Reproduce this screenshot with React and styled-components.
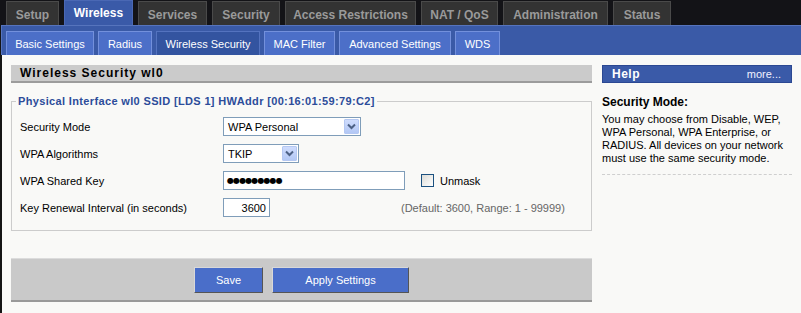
import React from 'react';
import styled, { createGlobalStyle } from 'styled-components';

const Global = createGlobalStyle`
  * { box-sizing: border-box; }
  html, body { margin: 0; padding: 0; background: #141414; }
  body {
    font-family: "Liberation Sans", Arial, sans-serif;
    font-size: 11px;
    color: #000;
  }
`;

const Page = styled.div`
  width: 801px;
  height: 313px;
  overflow: hidden;
  background: #141414;
  display: flex;
  flex-direction: column;
`;

const TopBar = styled.nav`
  height: 25px;
  flex: none;
  display: flex;
  align-items: flex-end;
  gap: 5px;
  padding-left: 6px;
  background: #131317;
`;

const MainTab = styled.div`
  width: ${p => p.$w}px;
  height: ${p => (p.$active ? 25 : 24)}px;
  display: flex;
  align-items: center;
  justify-content: center;
  font-weight: bold;
  font-size: 12px;
  color: ${p => (p.$active ? '#ffffff' : '#9a9a9a')};
  background: ${p => (p.$active ? '#3a5aa8' : '#333333')};
  border: 1px solid ${p => (p.$active ? '#4a68b4' : '#4a4a4a')};
  border-bottom: none;
  padding-top: ${p => (p.$active ? 0 : 2)}px;
`;

const SubBar = styled.div`
  height: 30px;
  flex: none;
  margin-left: 1px;
  display: flex;
  align-items: flex-end;
  gap: 4px;
  padding-left: 4px;
  background: #3a5aa7;
  border-top: 1px solid #5674bd;
  border-left: 1px solid #5674bd;
`;

const SubTab = styled.div`
  width: ${p => p.$w}px;
  height: 24px;
  display: flex;
  align-items: center;
  justify-content: center;
  color: #fff;
  font-size: 11px;
  background: ${p => (p.$active ? '#3354a0' : '#4c6fc8')};
  border: 1px solid ${p => (p.$active ? '#5473bf' : '#7390dc')};
  border-bottom: none;
`;

const Content = styled.main`
  flex: 1;
  margin-left: 2px;
  background: #f9f9f7;
  display: grid;
  grid-template-columns: 581px 190px;
  column-gap: 10px;
  align-items: start;
  padding: 10px 0 0 9px;
`;

const MainCol = styled.section`
  display: flex;
  flex-direction: column;
`;

const SectionHeader = styled.h2`
  margin: 0;
  height: 18px;
  display: flex;
  align-items: center;
  padding-left: 9px;
  font-size: 12px;
  font-weight: bold;
  letter-spacing: 1px;
  background: #cbcbcb;
  border-bottom: 2px solid #9c9c9c;
`;

const Fieldset = styled.fieldset`
  margin: 11px 0 0 0;
  border: 1px solid #cccccc;
  padding: 5px 8px 9px 8px;
`;

const Legend = styled.legend`
  margin-left: -4px;
  padding: 0 2px;
  color: #2c4c9a;
  font-weight: bold;
  font-size: 11px;
  letter-spacing: 0.35px;
  line-height: 14px;
`;

const Row = styled.div`
  height: 27px;
  display: flex;
  align-items: center;
`;

const Label = styled.div`
  width: 203px;
  flex: none;
`;

const SelectBox = styled.div`
  width: ${p => p.$w}px;
  height: 19px;
  display: flex;
  align-items: center;
  justify-content: space-between;
  background: #fff;
  border: 1px solid #7f9db9;
  padding-left: 4px;
`;

const Arrow = styled.span`
  width: 15px;
  height: 15px;
  margin-right: 1px;
  display: flex;
  align-items: center;
  justify-content: center;
  background: linear-gradient(#cfdcfd, #b3c8f5);
  border: 1px solid #b5c8f2;
  border-radius: 1px;
`;

const TextBox = styled.div`
  width: ${p => p.$w}px;
  height: 19px;
  display: flex;
  align-items: center;
  justify-content: ${p => (p.$right ? 'flex-end' : 'flex-start')};
  background: #fff;
  border: 1px solid #7f9db9;
  padding: 0 3px 0 3px;
  font-family: ${p => (p.$dots ? '"DejaVu Sans", sans-serif' : 'inherit')};
  font-size: ${p => (p.$dots ? '8px' : '11px')};
  letter-spacing: ${p => (p.$dots ? '-0.9px' : 'normal')};
`;

const CheckLabel = styled.label`
  margin-left: 16px;
  display: flex;
  align-items: center;
  gap: 6px;
`;

const Check = styled.span`
  width: 13px;
  height: 13px;
  border: 1px solid #1c5180;
  background: linear-gradient(135deg, #dcdcd7, #ffffff);
`;

const Note = styled.span`
  margin-left: ${p => p.$ml}px;
  color: #666;
`;

const ButtonBar = styled.div`
  margin-top: 27px;
  height: 44px;
  display: flex;
  align-items: center;
  justify-content: center;
  gap: 9px;
  background: #c9c9c9;
  border-top: 1px solid #dcdcdc;
  border-bottom: 2px solid #999;
`;

const Button = styled.button`
  width: ${p => p.$w}px;
  height: 26px;
  font-family: "Liberation Sans", Arial, sans-serif;
  font-size: 11px;
  color: #fff;
  background: #4a6ec9;
  border: 1px solid;
  border-color: #d8d8d8 #555 #555 #d8d8d8;
  padding: 0;
`;

const HelpCol = styled.aside`
  display: flex;
  flex-direction: column;
`;

const HelpHeader = styled.div`
  height: 18px;
  display: flex;
  align-items: center;
  justify-content: space-between;
  padding: 0 10px 0 9px;
  background: #3a5aa8;
  border: 1px solid #2b4892;
  color: #fff;
`;

const HelpTitle = styled.span`
  font-weight: bold;
  font-size: 12px;
  letter-spacing: 0.5px;
`;

const More = styled.span`
  font-size: 11px;
  color: #f0f0ff;
`;

const HelpHeading = styled.div`
  margin-top: 12px;
  font-weight: bold;
  font-size: 12px;
  line-height: 14px;
`;

const HelpText = styled.p`
  margin: 4px 0 0 0;
  line-height: 13px;
  padding-bottom: 9px;
  border-bottom: 1px dashed #cfcfcf;
`;

const Chevron = () => (
  <svg width="9" height="7" viewBox="0 0 9 7">
    <path d="M1 1.5 L4.5 5 L8 1.5" fill="none" stroke="#4d6185" strokeWidth="2" />
  </svg>
);

const mainTabs = [
  ['Setup', 53],
  ['Wireless', 69, true],
  ['Services', 69],
  ['Security', 68],
  ['Access Restrictions', 131],
  ['NAT / QoS', 77],
  ['Administration', 105],
  ['Status', 58],
];

const subTabs = [
  ['Basic Settings', 88],
  ['Radius', 54],
  ['Wireless Security', 104, true],
  ['MAC Filter', 71],
  ['Advanced Settings', 112],
  ['WDS', 45],
];

export default function App() {
  return (
    <>
      <Global />
      <Page>
        <TopBar>
          {mainTabs.map(([t, w, a]) => (
            <MainTab key={t} $w={w} $active={a}>{t}</MainTab>
          ))}
        </TopBar>
        <SubBar>
          {subTabs.map(([t, w, a]) => (
            <SubTab key={t} $w={w} $active={a}>{t}</SubTab>
          ))}
        </SubBar>
        <Content>
          <MainCol>
            <SectionHeader>Wireless Security wl0</SectionHeader>
            <Fieldset>
              <Legend>Physical Interface wl0 SSID [LDS 1] HWAddr [00:16:01:59:79:C2]</Legend>
              <Row>
                <Label>Security Mode</Label>
                <SelectBox $w={138}>WPA Personal<Arrow><Chevron /></Arrow></SelectBox>
              </Row>
              <Row>
                <Label>WPA Algorithms</Label>
                <SelectBox $w={76}>TKIP<Arrow><Chevron /></Arrow></SelectBox>
              </Row>
              <Row>
                <Label>WPA Shared Key</Label>
                <TextBox $w={182} $dots>●●●●●●●●●</TextBox>
                <CheckLabel><Check />Unmask</CheckLabel>
              </Row>
              <Row>
                <Label>Key Renewal Interval (in seconds)</Label>
                <TextBox $w={47} $right>3600</TextBox>
                <Note $ml={131}>(Default: 3600, Range: 1 - 99999)</Note>
              </Row>
            </Fieldset>
            <ButtonBar>
              <Button $w={69}>Save</Button>
              <Button $w={137}>Apply Settings</Button>
            </ButtonBar>
          </MainCol>
          <HelpCol>
            <HelpHeader>
              <HelpTitle>Help</HelpTitle>
              <More>more...</More>
            </HelpHeader>
            <HelpHeading>Security Mode:</HelpHeading>
            <HelpText>
              You may choose from Disable, WEP, WPA Personal, WPA Enterprise, or RADIUS. All devices on your network must use the same security mode.
            </HelpText>
          </HelpCol>
        </Content>
      </Page>
    </>
  );
}
